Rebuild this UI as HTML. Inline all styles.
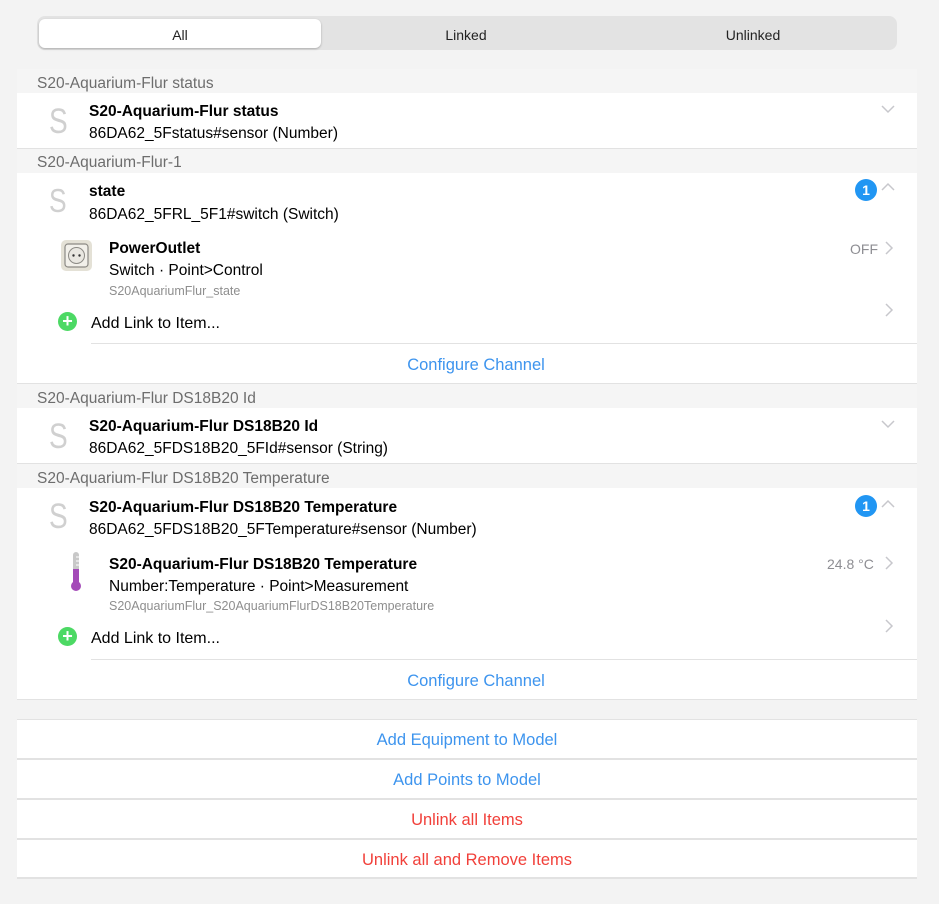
<!DOCTYPE html>
<html><head><meta charset="utf-8"><style>
*{margin:0;padding:0;box-sizing:border-box}
body{width:939px;height:904px;background:#f3f3f3;font-family:"Liberation Sans",sans-serif;position:relative;overflow:hidden;color:#000}
.a{position:absolute;white-space:nowrap}
.seg{left:37px;top:16px;width:860px;height:34px;background:#e3e3e3;border-radius:8px}
.sel{left:39px;top:19px;width:282px;height:29px;background:#fff;border-radius:6px;box-shadow:0 1px 2px rgba(0,0,0,.25)}
.st{font-size:14px;color:#222;top:27px;transform:translateX(-50%)}
.hdr{left:17px;width:900px;height:24px;background:#f5f5f5}
.ht{left:37px;font-size:15.5px;color:#6d6d6d;margin-top:2px}
.card{left:17px;width:900px;background:#fff}
.bs{left:49px;font-size:35px;color:#d0d0d0;transform:scaleX(.8);transform-origin:left;margin-top:2px}
.t{font-size:15.5px;font-weight:bold;margin-top:1px}
.s{font-size:15.5px;margin-top:1px}
.x{font-size:12.5px;color:#8e8e8e;margin-top:1px}
.line{height:1px;background:#e2e2e2}
.blue{color:#3d94ee}
.red{color:#f1403a}
.c{transform:translateX(-50%);font-size:16.5px;margin-top:1px}
.badge{width:22px;height:22px;border-radius:11px;background:#2196f3;color:#fff;font-size:14px;font-weight:bold;text-align:center;line-height:22px}
.plus{width:19px;height:19px;border-radius:10px;background:#4cd964;color:#fff;font-size:18px;font-weight:bold;text-align:center;line-height:19px}
</style></head><body>
<div class="a seg"></div><div class="a sel"></div>
<div class="a st" style="left:180px">All</div>
<div class="a st" style="left:466px">Linked</div>
<div class="a st" style="left:753px">Unlinked</div>

<div class="a hdr" style="top:69px"></div><div class="a ht" style="top:73px">S20-Aquarium-Flur status</div>
<div class="a card" style="top:93px;height:55px"></div>
<div class="a bs" style="top:100px">S</div>
<div class="a t" style="left:89px;top:102px">S20-Aquarium-Flur status</div>
<div class="a s" style="left:89px;top:124px">86DA62_5Fstatus#sensor (Number)</div>
<svg class="a" style="left:880px;top:103px" width="16" height="12"><path d="M2 3l6 6 6-6" fill="none" stroke="#c7c7cc" stroke-width="1.5"/></svg>
<div class="a line" style="left:17px;width:900px;top:148px"></div>

<div class="a hdr" style="top:149px"></div><div class="a ht" style="top:152px">S20-Aquarium-Flur-1</div>
<div class="a card" style="top:173px;height:210px"></div>
<div class="a bs" style="top:180px;font-size:33px">S</div>
<div class="a t" style="left:89px;top:182px">state</div>
<div class="a s" style="left:89px;top:205px">86DA62_5FRL_5F1#switch (Switch)</div>
<div class="a badge" style="left:855px;top:179px">1</div>
<svg class="a" style="left:880px;top:181px" width="16" height="12"><path d="M2 9l6-6 6 6" fill="none" stroke="#c7c7cc" stroke-width="1.5"/></svg>
<svg class="a" style="left:60px;top:239px" width="33" height="33"><rect x="1" y="1" width="31" height="31" rx="5" fill="#e4e1d6"/><rect x="5" y="5" width="23" height="23" rx="3" fill="#f2f0ea" stroke="#8c8a85" stroke-width="1.2"/><circle cx="16.5" cy="16.5" r="8" fill="#e9e7e1" stroke="#8c8a85" stroke-width="1"/><circle cx="13.5" cy="16.5" r="1.2" fill="#333"/><circle cx="19.5" cy="16.5" r="1.2" fill="#333"/></svg>
<div class="a t" style="left:109px;top:239px">PowerOutlet</div>
<div class="a s" style="left:109px;top:261px">Switch · Point&gt;Control</div>
<div class="a x" style="left:109px;top:283px">S20AquariumFlur_state</div>
<div class="a" style="left:850px;top:241px;font-size:14px;color:#8e8e93">OFF</div>
<svg class="a" style="left:884px;top:240px" width="10" height="16"><path d="M2 2l6 6-6 6" fill="none" stroke="#c7c7cc" stroke-width="1.5"/></svg>
<div class="a plus" style="left:58px;top:312px">+</div>
<div class="a s" style="left:91px;top:314px;font-size:16px">Add Link to Item...</div>
<svg class="a" style="left:884px;top:302px" width="10" height="16"><path d="M2 2l6 6-6 6" fill="none" stroke="#c7c7cc" stroke-width="1.5"/></svg>
<div class="a line" style="left:91px;width:826px;top:343px"></div>
<div class="a c blue" style="left:476px;top:355px">Configure Channel</div>
<div class="a line" style="left:17px;width:900px;top:383px"></div>

<div class="a hdr" style="top:384px"></div><div class="a ht" style="top:388px">S20-Aquarium-Flur DS18B20 Id</div>
<div class="a card" style="top:408px;height:55px"></div>
<div class="a bs" style="top:415px">S</div>
<div class="a t" style="left:89px;top:417px">S20-Aquarium-Flur DS18B20 Id</div>
<div class="a s" style="left:89px;top:439px">86DA62_5FDS18B20_5FId#sensor (String)</div>
<svg class="a" style="left:880px;top:418px" width="16" height="12"><path d="M2 3l6 6 6-6" fill="none" stroke="#c7c7cc" stroke-width="1.5"/></svg>
<div class="a line" style="left:17px;width:900px;top:463px"></div>

<div class="a hdr" style="top:464px"></div><div class="a ht" style="top:468px">S20-Aquarium-Flur DS18B20 Temperature</div>
<div class="a card" style="top:488px;height:211px"></div>
<div class="a bs" style="top:495px">S</div>
<div class="a t" style="left:89px;top:498px">S20-Aquarium-Flur DS18B20 Temperature</div>
<div class="a s" style="left:89px;top:520px">86DA62_5FDS18B20_5FTemperature#sensor (Number)</div>
<div class="a badge" style="left:855px;top:495px">1</div>
<svg class="a" style="left:880px;top:498px" width="16" height="12"><path d="M2 9l6-6 6 6" fill="none" stroke="#c7c7cc" stroke-width="1.5"/></svg>
<svg class="a" style="left:69px;top:551px" width="14" height="42"><rect x="4" y="1" width="6" height="34" rx="3" fill="#c8c8c8"/><rect x="4" y="18" width="6" height="18" fill="#a44bb8"/><circle cx="7" cy="35" r="5" fill="#a44bb8"/><path d="M7 6h3M7 10h3M7 14h3" stroke="#fff" stroke-width="1"/></svg>
<div class="a t" style="left:109px;top:555px">S20-Aquarium-Flur DS18B20 Temperature</div>
<div class="a s" style="left:109px;top:577px">Number:Temperature · Point&gt;Measurement</div>
<div class="a x" style="left:109px;top:598px">S20AquariumFlur_S20AquariumFlurDS18B20Temperature</div>
<div class="a" style="left:827px;top:556px;font-size:14px;color:#8e8e93">24.8 °C</div>
<svg class="a" style="left:884px;top:555px" width="10" height="16"><path d="M2 2l6 6-6 6" fill="none" stroke="#c7c7cc" stroke-width="1.5"/></svg>
<div class="a plus" style="left:58px;top:627px">+</div>
<div class="a s" style="left:91px;top:629px;font-size:16px">Add Link to Item...</div>
<svg class="a" style="left:884px;top:618px" width="10" height="16"><path d="M2 2l6 6-6 6" fill="none" stroke="#c7c7cc" stroke-width="1.5"/></svg>
<div class="a line" style="left:91px;width:826px;top:659px"></div>
<div class="a c blue" style="left:476px;top:671px">Configure Channel</div>
<div class="a line" style="left:17px;width:900px;top:699px"></div>

<div class="a line" style="left:17px;width:900px;top:719px"></div>
<div class="a card" style="top:720px;height:158px"></div>
<div class="a c blue" style="left:467px;top:730px">Add Equipment to Model</div>
<div class="a line" style="left:17px;width:900px;top:758px;height:2px"></div>
<div class="a c blue" style="left:467px;top:770px">Add Points to Model</div>
<div class="a line" style="left:17px;width:900px;top:798px;height:2px"></div>
<div class="a c red" style="left:467px;top:810px">Unlink all Items</div>
<div class="a line" style="left:17px;width:900px;top:838px;height:2px"></div>
<div class="a c red" style="left:467px;top:850px">Unlink all and Remove Items</div>
<div class="a line" style="left:17px;width:900px;top:877px;height:2px"></div>
</body></html>
